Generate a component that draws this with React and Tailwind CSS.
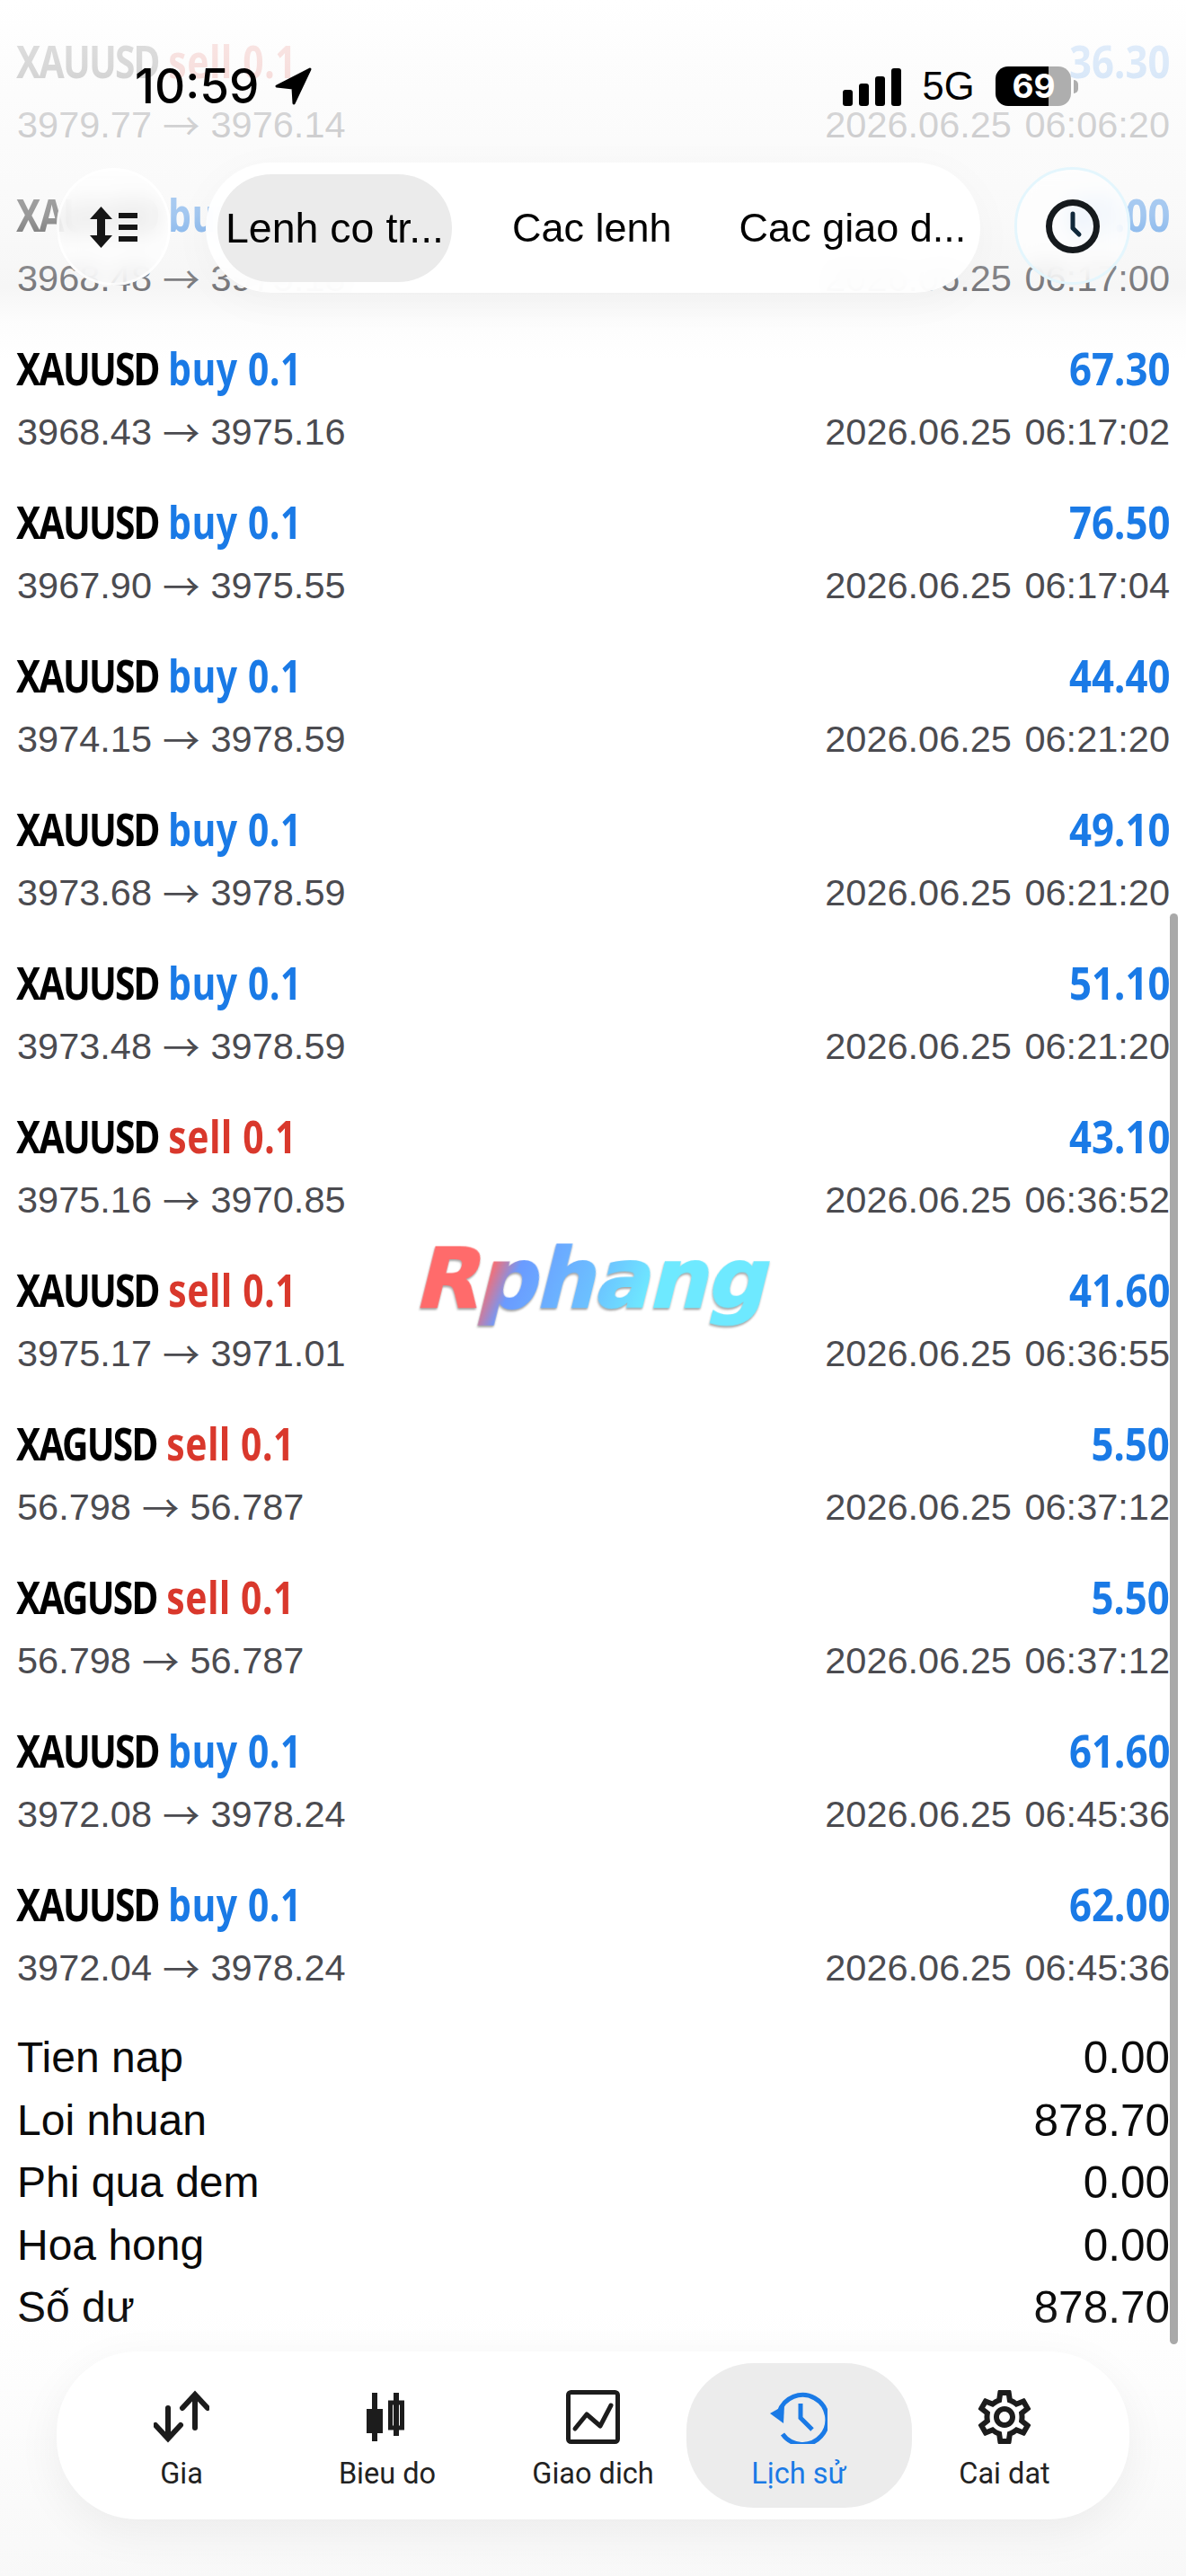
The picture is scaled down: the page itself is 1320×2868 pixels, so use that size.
import React from 'react';
import { MdOutlineSettings } from 'react-icons/md';

const rows = [
  ['XAUUSD', 'sell', '3979.77', '3976.14', '36.30', '2026.06.25 06:06:20'],
  ['XAUUSD', 'buy', '3968.48', '3975.18', '67.00', '2026.06.25 06:17:00'],
  ['XAUUSD', 'buy', '3968.43', '3975.16', '67.30', '2026.06.25 06:17:02'],
  ['XAUUSD', 'buy', '3967.90', '3975.55', '76.50', '2026.06.25 06:17:04'],
  ['XAUUSD', 'buy', '3974.15', '3978.59', '44.40', '2026.06.25 06:21:20'],
  ['XAUUSD', 'buy', '3973.68', '3978.59', '49.10', '2026.06.25 06:21:20'],
  ['XAUUSD', 'buy', '3973.48', '3978.59', '51.10', '2026.06.25 06:21:20'],
  ['XAUUSD', 'sell', '3975.16', '3970.85', '43.10', '2026.06.25 06:36:52'],
  ['XAUUSD', 'sell', '3975.17', '3971.01', '41.60', '2026.06.25 06:36:55'],
  ['XAGUSD', 'sell', '56.798', '56.787', '5.50', '2026.06.25 06:37:12'],
  ['XAGUSD', 'sell', '56.798', '56.787', '5.50', '2026.06.25 06:37:12'],
  ['XAUUSD', 'buy', '3972.08', '3978.24', '61.60', '2026.06.25 06:45:36'],
  ['XAUUSD', 'buy', '3972.04', '3978.24', '62.00', '2026.06.25 06:45:36'],
];

const summary = [
  ['Tien nap', '0.00'],
  ['Loi nhuan', '878.70'],
  ['Phi qua dem', '0.00'],
  ['Hoa hong', '0.00'],
  ['Số dư', '878.70'],
];

function Row({ r }) {
  const buy = r[1] === 'buy';
  return (
    <div className="pb-[34px]">
      <div className="-mt-[1px] flex h-[71px] items-center justify-between font-['Noto_Sans'] text-[50px] leading-[70px] font-bold">
        <span className="-ml-[1px] inline-block origin-left scale-x-[0.815] whitespace-nowrap text-black">
          <span className="tracking-[-2.2px]">{r[0]}</span>{' '}
          <span className={"tracking-[0.8px] " + (buy ? 'text-[#1a7ae6]' : 'text-[#d9382c]')}>{r[1]} 0.1</span>
        </span>
        <span className="inline-block origin-right scale-x-[0.875] whitespace-nowrap text-[#1a7ae6]">{r[4]}</span>
      </div>
      <div className="flex h-[67px] items-center justify-between pt-[3px] font-['Liberation_Sans'] text-[41.5px] leading-[67px] text-[#4b4b50]">
        <span className="flex items-center gap-[12px]">
          <span>{r[2]}</span>
          <span className="font-['Noto_Sans_CJK_SC'] text-[#4b4b50]">→</span>
          <span>{r[3]}</span>
        </span>
        <span className="[word-spacing:3px]">{r[5]}</span>
      </div>
    </div>
  );
}

function GiaIcon() {
  return (
    <svg width="62" height="60" viewBox="0 0 62 60" fill="none" stroke="#1c1c1c" strokeWidth="6" strokeLinecap="round" strokeLinejoin="miter">
      <path d="M46 42V6M32 20L46 5L60 20" />
      <path d="M16 20V54M2 39L16 54L30 39" />
    </svg>
  );
}
function ChartIcon() {
  return (
    <svg width="60" height="60" viewBox="0 0 60 60" fill="#1c1c1c">
      <rect x="13" y="3" width="6" height="54" />
      <rect x="7" y="21" width="18" height="27" />
      <rect x="37" y="3" width="6" height="48" />
      <rect x="33.5" y="14" width="13" height="28" fill="none" stroke="#1c1c1c" strokeWidth="5" />
    </svg>
  );
}
function TradeIcon() {
  return (
    <svg width="60" height="60" viewBox="0 0 60 60" fill="none" stroke="#1c1c1c" strokeWidth="5" strokeLinejoin="round" strokeLinecap="round">
      <rect x="2.5" y="2.5" width="55" height="55" rx="3" />
      <path d="M10 43L23 27L38 40L50 17" />
    </svg>
  );
}
function HistoryIcon() {
  return (
    <svg width="64" height="60" viewBox="0 0 64 60" fill="none" stroke="#1a7ae6" strokeWidth="5">
      <path d="M10 25A27.5 27.5 0 1 1 14 49" />
      <path d="M0 26L16 17L15 37Z" fill="#1a7ae6" stroke="none" />
      <path d="M34 15V31L47 44" />
    </svg>
  );
}
function NavItem({ label, children }) {
  return (
    <div className="flex h-[161px] w-[229px] flex-col items-center text-[#222222]">
      <div className="mt-[30px] flex h-[60px] items-center justify-center">{children}</div>
      <span className="mt-[14px] font-['Roboto'] text-[32.5px] leading-[38px] whitespace-nowrap">{label}</span>
    </div>
  );
}

export default function App() {
  return (
    <div className="relative h-[2868px] w-[1320px] overflow-hidden bg-white">
      <main className="pt-[33px] pr-[18px] pl-[19px]">
        {rows.map((r, i) => (
          <Row key={i} r={r} />
        ))}
        <div className="font-['Liberation_Sans'] text-[49.5px] leading-[69.5px] text-[#0a0a0a]">
          {summary.map(([a, b]) => (
            <div key={a} className="flex justify-between">
              <span className="text-[48px]">{a}</span>
              <span>{b}</span>
            </div>
          ))}
        </div>
      </main>

      {/* watermark */}
      <div className="absolute top-[1368px] left-[468px] -skew-x-[14deg] bg-[linear-gradient(100deg,#ff6b6b_0%,#ff6b6b_20%,#6a9bff_28%,#6cc0ff_50%,#6ee9ff_66%,#6ee9ff_100%)] bg-clip-text font-['DejaVu_Sans'] text-[92px] leading-[112px] font-bold tracking-[-1px] text-transparent drop-shadow-[0_2px_1px_rgba(90,90,90,0.55)] [-webkit-text-stroke:2px_transparent]">
        Rphang
      </div>

      {/* top fade */}
      <div className="absolute top-0 left-0 h-[400px] w-full bg-[linear-gradient(to_bottom,rgba(255,255,255,0.9)_0%,rgba(252,252,252,0.85)_20%,rgba(246,246,246,0.62)_60%,rgba(225,225,225,0.3)_80%,rgba(235,235,235,0.12)_90%,rgba(255,255,255,0)_100%)]" />

      {/* status bar */}
      <div className="absolute top-[74px] left-0 flex h-[44px] w-full items-center text-black">
        <span className="ml-[150px] font-['Inter'] text-[53px] leading-[44px] font-medium">10:59</span>
        <svg className="ml-[17px]" width="42" height="42" viewBox="0 0 42 42" fill="#000" stroke="#000" strokeWidth="3" strokeLinejoin="round">
          <path d="M40 2L3 21L21 23L22 40Z" />
        </svg>
        <div className="ml-[591px] flex h-[43px] items-end gap-[7px]">
          <div className="h-[18px] w-[11px] rounded-[3px] bg-black" />
          <div className="h-[25px] w-[11px] rounded-[3px] bg-black" />
          <div className="h-[33px] w-[11px] rounded-[3px] bg-black" />
          <div className="h-[42px] w-[11px] rounded-[3px] bg-black" />
        </div>
        <span className="ml-[23px] font-['Liberation_Sans'] text-[43.5px] leading-[44px]">5G</span>
        <div className="ml-[24px] flex h-[44px] w-[84px] items-center justify-center rounded-[14px] bg-[linear-gradient(to_right,#000_70%,#aeaeae_70%)]">
          <span className="font-['Inter'] text-[37px] leading-[44px] font-bold text-white">69</span>
        </div>
        <div className="ml-[3px] h-[15px] w-[5px] rounded-r-full bg-[#aeaeae]" />
      </div>

      {/* tabs */}
      <div className="absolute top-[181px] left-[229px] flex h-[145px] w-[862px] items-center rounded-full bg-white/[.94] pl-[13px] font-['Liberation_Sans'] text-[45px] leading-[52px] text-black shadow-[0_10px_50px_rgba(0,0,0,0.03)] backdrop-blur-md">
        <div className="flex h-[120px] w-[261px] items-center justify-center rounded-full bg-[#ebebeb] text-[46.5px]">Lenh co tr...</div>
        <span className="ml-[67px]">Cac lenh</span>
        <span className="ml-[75px]">Cac giao d...</span>
      </div>

      {/* left glass button */}
      <div className="absolute top-[187px] left-[63px] flex h-[131px] w-[127px] items-center justify-center rounded-full border-[3px] border-white/80 bg-white/70 backdrop-blur-md">
        <svg width="54" height="46" viewBox="0 0 54 46" fill="#161616">
          <path d="M12.5 0L25 14H17V32H25L12.5 46L0 32H8V14H0Z" />
          <rect x="32" y="7" width="21" height="6" />
          <rect x="32" y="20" width="21" height="6" />
          <rect x="32" y="33" width="21" height="6" />
        </svg>
      </div>

      {/* right glass button */}
      <div className="absolute top-[186px] left-[1129px] flex h-[131px] w-[129px] items-center justify-center rounded-full border-[3px] border-[#e4f6fd] bg-white/65 backdrop-blur-md">
        <svg width="62" height="62" viewBox="0 0 62 62" fill="none" stroke="#161a1d" strokeWidth="7">
          <circle cx="31" cy="31" r="26.5" />
          <path d="M31 17V33L38 40" stroke="#10283a" strokeWidth="5" strokeLinecap="round" strokeLinejoin="round" />
        </svg>
      </div>

      {/* bottom fade */}
      <div className="absolute bottom-0 left-0 h-[300px] w-full bg-[linear-gradient(to_bottom,rgba(255,255,255,0)_0%,rgba(250,250,250,0.55)_40%,rgba(247,247,247,0.85)_100%)]" />

      {/* bottom nav */}
      <nav className="absolute top-[2618px] left-[63px] flex h-[187px] w-[1194px] items-center justify-center rounded-[90px] bg-white shadow-[0_14px_50px_rgba(0,0,0,0.06)]">
        <NavItem label="Gia"><GiaIcon /></NavItem>
        <NavItem label="Bieu do"><ChartIcon /></NavItem>
        <NavItem label="Giao dich"><TradeIcon /></NavItem>
        <div className="-mx-[11px] flex h-[161px] w-[251px] flex-col items-center rounded-[75px] bg-[#ececec] text-[#1a7ae6]">
          <div className="mt-[30px] flex h-[60px] items-center justify-center"><HistoryIcon /></div>
          <span className="mt-[14px] font-['Roboto'] text-[32.5px] leading-[38px] whitespace-nowrap">Lịch sử</span>
        </div>
        <NavItem label="Cai dat"><MdOutlineSettings size={72} color="#1c1c1c" /></NavItem>
      </nav>

      {/* scrollbar */}
      <div className="absolute top-[1017px] left-[1302px] h-[1593px] w-[9px] rounded-full bg-[#a9a9a9]" />
    </div>
  );
}
